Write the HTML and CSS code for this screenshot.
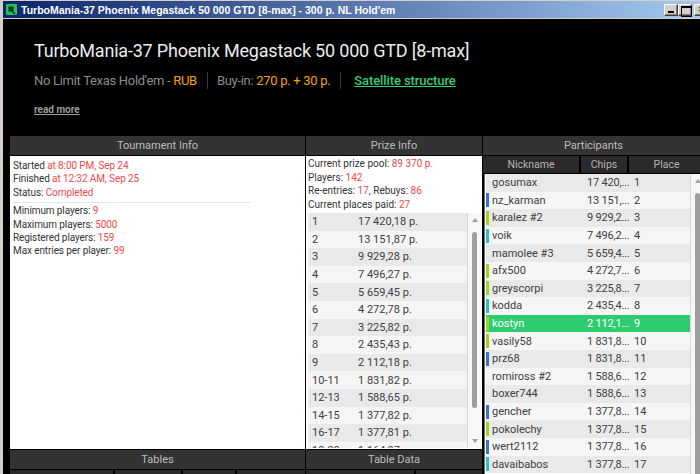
FILE: index.html
```html
<!DOCTYPE html>
<html>
<head>
<meta charset="utf-8" />
<title>TurboMania-37 Phoenix Megastack 50 000 GTD [8-max]</title>
<link rel="stylesheet" href="styles.css">
</head>
<body>
<div class="window">
  <div class="titlebar">
    <svg class="app_icon" width="11" height="11" viewBox="0 0 11 11">
      <rect x="0" y="0" width="11" height="11" rx="1" fill="#21c25a" />
      <rect x="2.5" y="2.5" width="5" height="5" fill="#0b3a1a" />
      <path d="M6 7 L9 10" stroke="#0b3a1a" stroke-width="1.6" />
    </svg>
    <span class="caption">TurboMania-37 Phoenix Megastack 50 000 GTD [8-max] - 300 p. NL Hold'em</span>
    <div class="controls">
      <span class="btn min"></span><span class="btn max"></span><span class="btn close">&#x2715;</span>
    </div>
  </div>

  <div class="lobby">
    <div class="hero">
      <h1>TurboMania-37 Phoenix Megastack 50 000 GTD [8-max]</h1>
      <div class="meta">
        <span>No Limit Texas Hold'em - <span class="hl">RUB</span></span>
        <i class="sep"></i>
        <span>Buy-in: <span class="hl">270 p. + 30 p.</span></span>
        <i class="sep"></i>
        <a class="sat" href="#">Satellite structure</a>
      </div>
      <a class="more" href="#">read more</a>
    </div>

    <div class="panels">
      <div class="col col_info">
        <h2>Tournament Info</h2>
        <div class="box info_box">
          <div>Started <span class="val">at 8:00 PM, Sep 24</span></div>
          <div>Finished <span class="val">at 12:32 AM, Sep 25</span></div>
          <div>Status: <span class="val">Completed</span></div>
          <hr />
          <div>Minimum players: <span class="val">9</span></div>
          <div>Maximum players: <span class="val">5000</span></div>
          <div>Registered players: <span class="val">159</span></div>
          <div>Max entries per player: <span class="val">99</span></div>
        </div>
        <h2>Tables</h2>
        <div class="subhead tables_head"><span></span><span></span><span></span><span></span></div>
      </div>

      <div class="col col_prize">
        <h2>Prize Info</h2>
        <div class="box prize_box">
          <div class="prize_text">
            <div>Current prize pool: <span class="val">89 370 p.</span></div>
            <div>Players: <span class="val">142</span></div>
            <div>Re-entries: <span class="val">17</span>, Rebuys: <span class="val">86</span></div>
            <div>Current places paid: <span class="val">27</span></div>
          </div>
          <div class="grid_wrap">
            <div class="rows prize_rows">
              <div class="prow"><span>1</span><span>17 420,18 p.</span></div>
              <div class="prow"><span>2</span><span>13 151,87 p.</span></div>
              <div class="prow"><span>3</span><span>9 929,28 p.</span></div>
              <div class="prow"><span>4</span><span>7 496,27 p.</span></div>
              <div class="prow"><span>5</span><span>5 659,45 p.</span></div>
              <div class="prow"><span>6</span><span>4 272,78 p.</span></div>
              <div class="prow"><span>7</span><span>3 225,82 p.</span></div>
              <div class="prow"><span>8</span><span>2 435,43 p.</span></div>
              <div class="prow"><span>9</span><span>2 112,18 p.</span></div>
              <div class="prow"><span>10-11</span><span>1 831,82 p.</span></div>
              <div class="prow"><span>12-13</span><span>1 588,65 p.</span></div>
              <div class="prow"><span>14-15</span><span>1 377,82 p.</span></div>
              <div class="prow"><span>16-17</span><span>1 377,81 p.</span></div>
              <div class="prow"><span>18-20</span><span>1 164,97 p.</span></div>
            </div>
            <div class="scroll prize_scroll">
              <span class="arr up"></span>
              <span class="track"><span class="thumb"></span></span>
              <span class="arr down"></span>
            </div>
          </div>
        </div>
        <h2>Table Data</h2>
        <div class="subhead data_head"><span></span><span></span></div>
      </div>

      <div class="col col_people">
        <h2>Participants</h2>
        <div class="subhead people_head"><span>Nickname</span><span>Chips</span><span>Place</span></div>
        <div class="grid_wrap people_wrap">
          <div class="rows">
            <div class="urow"><span class="nick"><i class="mark"></i>gosumax</span><span>17 420,...</span><span>1</span></div>
            <div class="urow"><span class="nick"><i class="mark blue"></i>nz_karman</span><span>13 151,...</span><span>2</span></div>
            <div class="urow"><span class="nick"><i class="mark lime"></i>karalez #2</span><span>9 929,2...</span><span>3</span></div>
            <div class="urow"><span class="nick"><i class="mark cyan"></i>voik</span><span>7 496,2...</span><span>4</span></div>
            <div class="urow"><span class="nick"><i class="mark"></i>mamolee #3</span><span>5 659,4...</span><span>5</span></div>
            <div class="urow"><span class="nick"><i class="mark lime"></i>afx500</span><span>4 272,7...</span><span>6</span></div>
            <div class="urow"><span class="nick"><i class="mark lime"></i>greyscorpi</span><span>3 225,8...</span><span>7</span></div>
            <div class="urow"><span class="nick"><i class="mark cyan"></i>kodda</span><span>2 435,4...</span><span>8</span></div>
            <div class="urow me"><span class="nick"><i class="mark lime"></i>kostyn</span><span>2 112,1...</span><span>9</span></div>
            <div class="urow"><span class="nick"><i class="mark lime"></i>vasily58</span><span>1 831,8...</span><span>10</span></div>
            <div class="urow"><span class="nick"><i class="mark blue"></i>prz68</span><span>1 831,8...</span><span>11</span></div>
            <div class="urow"><span class="nick"><i class="mark"></i>romiross #2</span><span>1 588,6...</span><span>12</span></div>
            <div class="urow"><span class="nick"><i class="mark"></i>boxer744</span><span>1 588,6...</span><span>13</span></div>
            <div class="urow"><span class="nick"><i class="mark blue"></i>gencher</span><span>1 377,8...</span><span>14</span></div>
            <div class="urow"><span class="nick"><i class="mark lime"></i>pokolechy</span><span>1 377,8...</span><span>15</span></div>
            <div class="urow"><span class="nick"><i class="mark blue"></i>wert2112</span><span>1 377,8...</span><span>16</span></div>
            <div class="urow"><span class="nick"><i class="mark cyan"></i>davaibabos</span><span>1 377,8...</span><span>17</span></div>
          </div>
          <div class="scroll people_scroll">
            <span class="arr up"></span>
            <span class="track"><span class="thumb"></span></span>
          </div>
        </div>
      </div>
    </div>
  </div>
</div>
</body>
</html>
```

FILE: styles.css
```css
* {
  box-sizing: border-box;
}
html, body {
  margin: 0;
  height: 100%;
  overflow: hidden;
  background-color: #000;
}
body {
  font-family: Roboto, 'Liberation Sans', sans-serif;
}
.window {
  width: 704px;
  height: 474px;
  border-left: 3px solid #d4d0c8;
  display: flex;
  flex-direction: column;
}

/* title bar */
.titlebar {
  height: 19px;
  flex: none;
  display: flex;
  align-items: center;
  padding-left: 3px;
  border-top: 1px solid #d4d0c8;
  border-bottom: 1px solid #d4d0c8;
  background: linear-gradient(to right, #0a246a, #a6caf0);
}
.app_icon {
  flex: none;
  margin-right: 4px;
}
.caption {
  flex: 1;
  color: #fff;
  font-family: 'Liberation Sans', sans-serif;
  font-size: 10.5px;
  font-weight: bold;
  white-space: nowrap;
}
.controls {
  display: flex;
  margin-right: -4px;
}
.btn {
  width: 14px;
  height: 12px;
  background-color: #d4d0c8;
  border: 1px solid;
  border-color: #fff #404040 #404040 #fff;
  box-shadow: inset -1px -1px #808080;
  position: relative;
  font: bold 8px/10px 'DejaVu Sans', sans-serif;
  text-align: center;
  color: #000;
}
.btn.max {
  margin-right: 2px;
}
.btn.min::after {
  content: '';
  position: absolute;
  left: 3px;
  bottom: 2px;
  width: 6px;
  height: 2px;
  background-color: #000;
}
.btn.max::after {
  content: '';
  position: absolute;
  left: 2px;
  top: 1px;
  width: 9px;
  height: 8px;
  border: 1px solid #000;
  border-top-width: 2px;
}

/* header */
.lobby {
  flex: 1;
  display: flex;
  flex-direction: column;
  min-height: 0;
}
.hero {
  height: 116px;
  flex: none;
  padding: 20px 0 0 31px;
}
h1 {
  margin: 0;
  font-size: 18px;
  letter-spacing: -0.2px;
  line-height: 24px;
  font-weight: normal;
  color: #ececec;
  white-space: nowrap;
}
.meta {
  display: flex;
  align-items: center;
  margin-top: 8px;
  height: 18px;
  font-size: 13px;
  letter-spacing: -0.3px;
  color: #8c8c8c;
  white-space: nowrap;
}
.hl {
  color: #f5a300;
}
.sep {
  width: 1px;
  height: 17px;
  margin: 0 9px 0 10px;
  background-color: #3a3a3a;
}
.sat {
  margin-left: 4px;
  color: #34cc78;
  font-weight: 500;
  letter-spacing: -0.1px;
}
.more {
  display: inline-block;
  margin-top: 15px;
  font-size: 10px;
  font-weight: bold;
  color: #9a9a9a;
}

/* panels */
.panels {
  flex: 1;
  min-height: 0;
  display: flex;
  gap: 1px;
  padding: 1px 0 0 7px;
}
.col {
  display: flex;
  flex-direction: column;
  gap: 1px;
  min-height: 0;
}
.col_info {
  width: 295px;
}
.col_prize {
  width: 176px;
}
.col_people {
  flex: 1;
}
h2 {
  margin: 0;
  flex: none;
  height: 19px;
  line-height: 19px;
  background-color: #333;
  color: #bcbcbc;
  font-size: 11px;
  font-weight: normal;
  text-align: center;
}
.box {
  height: 293px;
  flex: none;
  background-color: #fff;
  font-size: 10px;
  color: #333;
}
.val {
  color: #f44848;
}
.info_box {
  padding: 3px 3px 1px;
  line-height: 13.4px;
  letter-spacing: -0.1px;
}
.info_box hr {
  width: 238px;
  margin: 3px 0 1px;
  border: 0;
  border-top: 1px solid #e4e4e4;
}
.subhead {
  flex: 1;
  display: flex;
  gap: 2px;
  background-color: #000;
}
.subhead > span {
  background-color: #2a2a2a;
}
.tables_head > span:nth-child(1) { width: 103px; }
.tables_head > span:nth-child(2) { width: 66px; }
.tables_head > span:nth-child(3) { width: 52px; }
.tables_head > span:nth-child(4) { flex: 1; }
.data_head > span:nth-child(1) { width: 108px; }
.data_head > span:nth-child(2) { flex: 1; }

/* prize info */
.prize_box {
  display: flex;
  flex-direction: column;
  padding: 0 1px 1px 2px;
}
.prize_text {
  padding: 1px 0 2px;
  line-height: 13.5px;
}
.grid_wrap {
  flex: 1;
  min-height: 0;
  display: flex;
  overflow: hidden;
}
.rows {
  flex: 1;
  min-width: 0;
  overflow: hidden;
}
.prow, .urow {
  height: 17.6px;
  display: grid;
  align-items: center;
  font-size: 11px;
  color: #404040;
  background-color: #f5f5f5;
  white-space: nowrap;
}
.prow:nth-child(odd), .urow:nth-child(odd) {
  background-color: #e9e9e9;
}
.prow {
  grid-template-columns: 46px 1fr;
  padding-left: 4px;
}

/* scrollbars */
.scroll {
  width: 14px;
  flex: none;
  display: flex;
  flex-direction: column;
  align-items: center;
  border-left: 1px solid #d6d6d6;
  background-color: #f7f7f7;
}
.arr {
  width: 0;
  height: 0;
  margin: 5px 0;
  border-left: 3px solid transparent;
  border-right: 3px solid transparent;
}
.arr.up {
  border-bottom: 4px solid #a0a0a0;
}
.arr.down {
  border-top: 4px solid #a0a0a0;
}
.track {
  flex: 1;
  display: flex;
  flex-direction: column;
  padding-top: 5px;
}
.thumb {
  width: 5px;
  border-radius: 3px;
  background-color: #9e9e9e;
}
.prize_scroll .thumb {
  height: 176px;
}
.people_scroll .thumb {
  height: 300px;
}

/* participants */
.people_head {
  flex: none;
  height: 17px;
  line-height: 17px;
  font-size: 10.5px;
  color: #b4b4b4;
  text-align: center;
}
.people_head > span:nth-child(1) { width: 96px; }
.people_head > span:nth-child(2) { width: 46px; }
.people_head > span:nth-child(3) { flex: 1; }
.people_wrap {
  margin-left: 1px;
  border-left: 1px solid #707070;
  padding-left: 1px;
  background-color: #fff;
}
.urow {
  grid-template-columns: 94px 48px 1fr;
}
.urow > span:nth-child(2) {
  padding-left: 7px;
  letter-spacing: -0.2px;
}
.urow > span:nth-child(3) {
  padding-left: 6px;
}
.nick {
  display: flex;
  align-items: center;
}
.mark {
  width: 3px;
  height: 14px;
  margin-right: 3px;
}
.mark.blue { background-color: #3a6fd8; }
.mark.lime { background-color: #9ed41c; }
.mark.cyan { background-color: #1fc2c8; }
.urow.me {
  background-color: #2ecc71;
  color: #fff;
}
```
